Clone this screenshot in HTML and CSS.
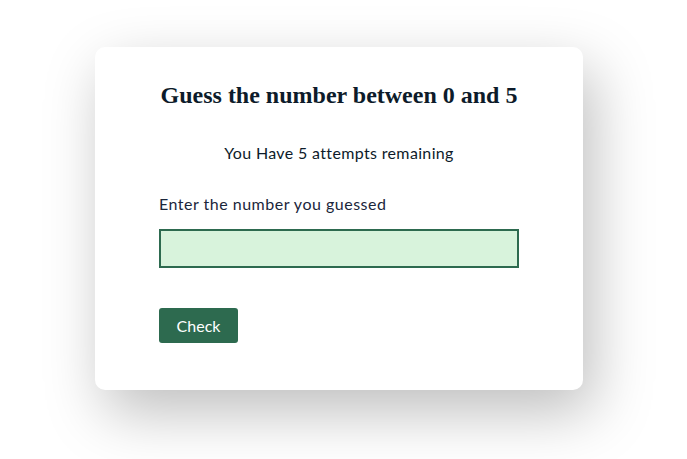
FILE: index.html
```html
<!DOCTYPE html>
<html>
<head>
<meta charset="utf-8">
<link rel="stylesheet" href="styles.css">
</head>
<body>
<div class="page">
  <div class="card">
    <h1 class="title">Guess the number between 0 and 5</h1>
    <p class="attempts">You Have 5 attempts remaining</p>
    <label class="label" for="guess">Enter the number you guessed</label>
    <input class="input" id="guess" type="text">
    <button class="btn">Check</button>
  </div>
</div>
</body>
</html>
```
FILE: styles.css
```css
html, body {
  margin: 0;
  padding: 0;
  background: #fff;
  min-height: 100vh;
}
.page {
  display: flex;
  justify-content: flex-start;
  padding-top: 47px;
  padding-left: 95px;
  min-height: 100vh;
  box-sizing: border-box;
}
.card {
  width: 488px;
  height: 343px;
  box-sizing: border-box;
  background: #fff;
  border-radius: 10px;
  padding: 30px 64px 0 64px;
  display: flex;
  flex-direction: column;
  align-items: flex-start;
  box-shadow: 10px 22px 60px rgba(0,0,0,0.26);
}
.title {
  align-self: stretch;
  text-align: center;
  margin: 0;
  font-family: "Liberation Serif", "Times New Roman", serif;
  font-weight: bold;
  font-size: 24px;
  color: #0d1b2a;
  line-height: 36px;
}
.attempts {
  align-self: stretch;
  text-align: center;
  margin: 30px 0 0 0;
  font-family: "Lato", sans-serif;
  font-size: 16px;
  color: #0d1b2a;
  line-height: 20px;
  letter-spacing: 0.35px;
}
.label {
  margin-top: 31px;
  font-family: "Lato", sans-serif;
  font-size: 16px;
  color: #1b263b;
  line-height: 20px;
  font-weight: 400;
  letter-spacing: 0.5px;
}
.input {
  margin-top: 15px;
  width: 360px;
  height: 39px;
  box-sizing: border-box;
  border: 2px solid #2d6a4f;
  background: #d8f3dc;
  outline: none;
  padding: 0 8px;
}
.btn {
  margin-top: 40px;
  width: 79px;
  height: 35px;
  border: none;
  border-radius: 3px;
  background: #2d6a4f;
  color: #fff;
  font-family: "Lato", sans-serif;
  font-size: 16px;
  padding: 0;
}
```
